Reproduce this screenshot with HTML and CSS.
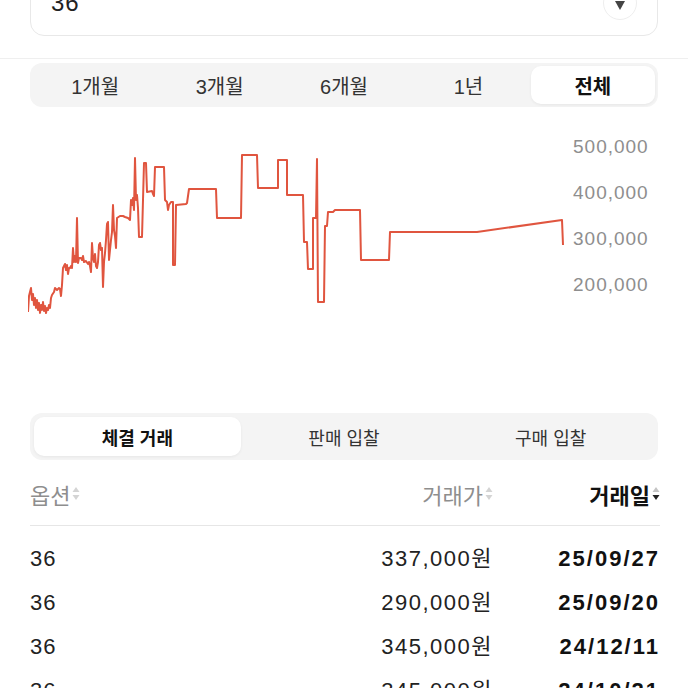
FILE: index.html
```html
<!DOCTYPE html>
<html lang="ko">
<head>
  <meta charset="UTF-8">
  <meta name="viewport" content="width=device-width, initial-scale=1.0">
  <title>시세</title>
  <link rel="stylesheet" href="styles.css">
</head>
<body>

  <div class="option-select">
    <span class="option-value">36</span>
    <span class="option-arrow"><span class="caret"></span></span>
  </div>

  <div class="period-wrap">
    <div class="segmented period">
      <button>1개월</button>
      <button>3개월</button>
      <button>6개월</button>
      <button>1년</button>
      <button class="active">전체</button>
    </div>
  </div>

  <!-- price chart -->
  <div class="chart">
    <svg class="chart-line" width="537" height="290" viewBox="28 107 537 290">
      <polyline fill="none" stroke="#e0553f" stroke-width="2" stroke-linejoin="round" points="28,312 29,296 31,288 32,300 33,294 34,305 35,298 36,308 37,300 38,310 39,303 40,313 41,305 42,310 43,302 44,311 45,306 46,313 47,308 48,310 49,305 50,308 51,298 52,295 54,292 55,288 57,290 59,288 60,289 61,296 62,285 63,268 65,264 66,270 67,265 68,274 69,268 70,268 71,266 72,268 73,248 74,262 75,256 76,262 77,218 78,263 79,258 81,258 82,260 83,256 84,262 86,261 88,264 89,262 90,266 91,272 92,243 93,258 94,262 95,254 96,266 97,268 98,262 99,245 100,243 101,250 102,248 103,287 104,262 105,253 106,240 107,224 108,222 109,260 110,250 111,240 112,232 113,205 114,230 115,236 116,248 117,218 120,216 123,216 125,217 128,218 130,220 131,200 132,205 133,198 134,210 135,158 136,200 137,195 138,208 139,237 141,237 142,237 143,200 144,163 146,163 147,192 152,191 153,194 154,196 155,167 164,167 165,200 167,202 168,210 169,205 171,202 173,202 173,265 175,265 176,205 186,204 187,203 189,189 216,189 217,218 241,218 242,155 257,155 258,188 278,188 278,160 287,160 287,195 303,195 304,242 307,242 308,269 313,269 313,218 316,218 317,159 318,302 324,302 325,226 327,226 328,212 333,212 335,210 360,210 361,260 389,260 390,232 477,232 562,220 563,245"/>
    </svg>
    <div class="chart-axis">
      <span>500,000</span>
      <span>400,000</span>
      <span>300,000</span>
      <span>200,000</span>
    </div>
  </div>

  <div class="segmented tabs">
    <button class="active">체결 거래</button>
    <button>판매 입찰</button>
    <button>구매 입찰</button>
  </div>

  <div class="trade-table">
    <div class="trade-head">
      <span class="col-option">옵션<svg class="sort" width="8" height="15" viewBox="0 0 8 15"><polygon points="4,1 7.5,6 0.5,6" fill="#d4d4d4"/><polygon points="0.5,9 7.5,9 4,14" fill="#d4d4d4"/></svg></span>
      <span class="col-price">거래가<svg class="sort" width="8" height="15" viewBox="0 0 8 15"><polygon points="4,1 7.5,6 0.5,6" fill="#d4d4d4"/><polygon points="0.5,9 7.5,9 4,14" fill="#d4d4d4"/></svg></span>
      <span class="col-date active">거래일<svg class="sort" width="8" height="15" viewBox="0 0 8 15"><polygon points="4,1 7.5,6 0.5,6" fill="#c4c4c4"/><polygon points="0.5,9 7.5,9 4,14" fill="#222"/></svg></span>
    </div>
    <div class="trade-rows">
      <div class="trade-row"><span class="col-option">36</span><span class="col-price">337,000원</span><span class="col-date">25/09/27</span></div>
      <div class="trade-row"><span class="col-option">36</span><span class="col-price">290,000원</span><span class="col-date">25/09/20</span></div>
      <div class="trade-row"><span class="col-option">36</span><span class="col-price">345,000원</span><span class="col-date">24/12/11</span></div>
      <div class="trade-row"><span class="col-option">36</span><span class="col-price">345,000원</span><span class="col-date">24/10/21</span></div>
    </div>
  </div>

</body>
</html>
```

FILE: styles.css
```css
/* Common styles */
body {
  margin: 0;
  font-family: "Liberation Sans", "Noto Sans CJK KR", sans-serif;
  color: #222;
  background: #fff;
  overflow: hidden;
}

button {
  font-family: inherit;
  border: none;
  background: none;
  padding: 0;
  cursor: pointer;
}

/* Option select */
.option-select {
  margin: -22px 30px 0;
  height: 58px;
  box-sizing: border-box;
  border: 1px solid #e8e8e8;
  border-radius: 14px;
  display: flex;
  align-items: center;
  justify-content: space-between;
  padding: 0 20px 8px 20px;
}

.option-value {
  font-size: 24px;
  letter-spacing: 1px;
  color: #222;
}

.option-arrow {
  width: 34px;
  height: 34px;
  box-sizing: border-box;
  border: 1px solid #eee;
  border-radius: 50%;
  display: flex;
  align-items: center;
  justify-content: center;
}

.caret {
  width: 0;
  height: 0;
  border-left: 5px solid transparent;
  border-right: 5px solid transparent;
  border-top: 9px solid #444;
  margin-top: 4px;
}

/* Segmented controls */
.period-wrap {
  margin-top: 22px;
  border-top: 1px solid #efefef;
  padding-top: 4px;
}

.segmented {
  margin: 0 30px;
  background-color: #f4f4f4;
  border-radius: 12px;
  padding: 3px;
  display: grid;
}

.segmented button {
  height: 38px;
  font-size: 20px;
  color: #333;
  border-radius: 10px;
}

.segmented button.active {
  background-color: #fff;
  color: #111;
  font-weight: 700;
  box-shadow: 0 1px 3px rgba(0, 0, 0, 0.06);
}

.period {
  grid-template-columns: repeat(5, 1fr);
}

.tabs {
  margin-top: 16px;
  padding: 4px;
  grid-template-columns: repeat(3, 1fr);
}

.tabs button {
  height: 39px;
  font-size: 18px;
}

/* Chart */
.chart {
  height: 290px;
  display: flex;
  padding-left: 28px;
}

.chart-line {
  display: block;
  flex-shrink: 0;
}

.chart-axis {
  display: flex;
  flex-direction: column;
  padding: 17px 0 0 8px;
}

.chart-axis span {
  height: 46px;
  line-height: 46px;
  font-size: 19px;
  letter-spacing: 1px;
  color: #8e8e8e;
}

/* Trade table */
.trade-table {
  margin: 0 28px 0 30px;
}

.trade-head,
.trade-row {
  display: grid;
  grid-template-columns: 1fr 200px 167px;
}

.trade-head {
  box-sizing: border-box;
  height: 66px;
  padding-top: 2px;
  align-items: center;
  border-bottom: 1px solid #e6e6e6;
  font-size: 22px;
  color: #8e8e8e;
}

.trade-head span {
  display: flex;
  align-items: center;
  gap: 2px;
}

.trade-head .col-price,
.trade-head .col-date {
  justify-content: flex-end;
}

.trade-head .col-date.active {
  color: #111;
  font-weight: 700;
}

.sort {
  display: block;
}

.trade-rows {
  padding-top: 11px;
}

.trade-row {
  height: 44px;
  line-height: 44px;
  font-size: 22px;
  color: #222;
}

.trade-row .col-option {
  letter-spacing: 1px;
}

.trade-row .col-price {
  text-align: right;
  letter-spacing: 1.5px;
}

.trade-row .col-date {
  text-align: right;
  font-weight: 700;
  color: #111;
  letter-spacing: 2px;
}
```
